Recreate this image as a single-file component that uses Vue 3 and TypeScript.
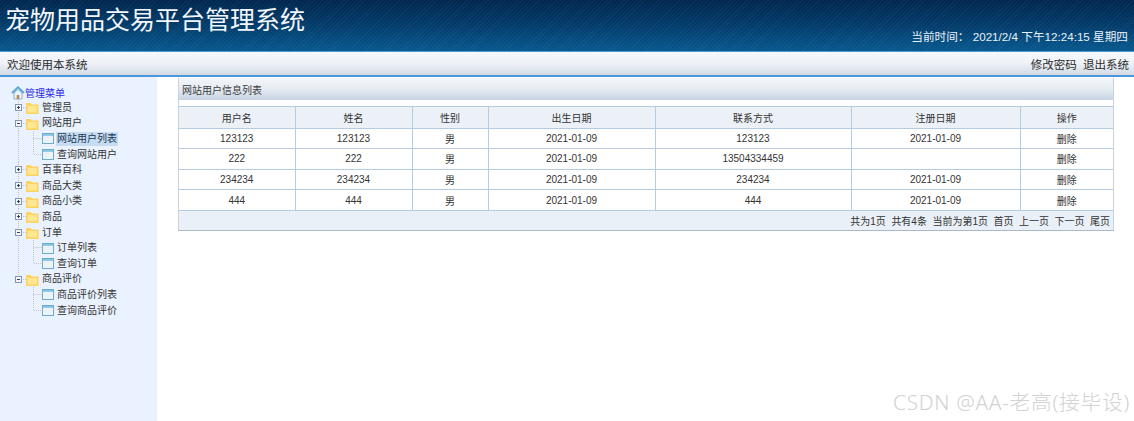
<script setup lang="ts">
interface TreeRow { label: string; kind: 'folder' | 'page'; open?: boolean; active?: boolean; last?: boolean; lastChild?: boolean }
const tree: TreeRow[] = [
  { label: '管理员', kind: 'folder' },
  { label: '网站用户', kind: 'folder', open: true },
  { label: '网站用户列表', kind: 'page', active: true },
  { label: '查询网站用户', kind: 'page', lastChild: true },
  { label: '百事百科', kind: 'folder' },
  { label: '商品大类', kind: 'folder' },
  { label: '商品小类', kind: 'folder' },
  { label: '商品', kind: 'folder' },
  { label: '订单', kind: 'folder', open: true },
  { label: '订单列表', kind: 'page' },
  { label: '查询订单', kind: 'page', lastChild: true },
  { label: '商品评价', kind: 'folder', open: true, last: true },
  { label: '商品评价列表', kind: 'page' },
  { label: '查询商品评价', kind: 'page', lastChild: true },
]
const heads = ['用户名', '姓名', '性别', '出生日期', '联系方式', '注册日期', '操作']
const rows = [
  ['123123', '123123', '男', '2021-01-09', '123123', '2021-01-09'],
  ['222', '222', '男', '2021-01-09', '13504334459', ''],
  ['234234', '234234', '男', '2021-01-09', '234234', '2021-01-09'],
  ['444', '444', '男', '2021-01-09', '444', '2021-01-09'],
]
const pager = ['共为1页', '共有4条', '当前为第1页', '首页', '上一页', '下一页', '尾页']
function trunkPath(i: number): string {
  if (i < 11) return 'M18.5 0V15.6'
  if (i === 11) return 'M18.5 0V5'
  return ''
}
</script>

<template>
  <div class="page">
    <header class="top">
      <h1 class="brand">宠物用品交易平台管理系统</h1>
      <div class="clock">当前时间： 2021/2/4 下午12:24:15 星期四</div>
    </header>
    <nav class="bar">
      <span>欢迎使用本系统</span>
      <span class="links">修改密码 退出系统</span>
    </nav>
    <div class="body">
      <aside class="side">
        <div class="root">
          <svg class="home" width="14" height="14" viewBox="0 0 14 14">
            <path d="M1 7 7 1.2 13 7" fill="none" stroke="#5aa7d6" stroke-width="1.8" />
            <path d="M3 7v6h8V7L7 3.4Z" fill="#e8f3fb" stroke="#8fb2cc" />
            <rect x="5.7" y="9" width="2.6" height="4" fill="#b5894f" />
          </svg>
          <span>管理菜单</span>
        </div>
        <div v-for="(r, i) in tree" :key="r.label" class="row">
          <svg class="guide" width="42" height="15.6" viewBox="0 0 42 15.6">
            <path v-if="trunkPath(i)" :d="trunkPath(i)" stroke="#c4c4c4" stroke-dasharray="1 1" fill="none" />
            <template v-if="r.kind === 'folder'">
              <path d="M21 7.5H26" stroke="#c4c4c4" stroke-dasharray="1 1" fill="none" />
              <rect x="15.5" y="4.5" width="6" height="6" fill="#f3f6fa" stroke="#8794ad" />
              <path d="M17 7.5H20" stroke="#28406e" />
              <path v-if="!r.open" d="M18.5 6V9" stroke="#28406e" />
              <path d="M26 3h4.5l1.5 1.5h6.5v9.5H26Z" fill="#fdd35f" />
              <rect x="27.5" y="6" width="9.5" height="6.5" fill="#ffe692" />
            </template>
            <template v-else>
              <path :d="r.lastChild ? 'M33.5 0V7.5H42' : 'M33.5 0V15.6M33.5 7.5H42'" stroke="#c4c4c4" stroke-dasharray="1 1" fill="none" />
            </template>
          </svg>
          <svg v-if="r.kind === 'page'" class="pageicon" width="13" height="13" viewBox="0 0 13 13">
            <rect x=".5" y="1.5" width="11" height="10" fill="#edf2f7" stroke="#6aaecd" />
            <rect x="1" y="2" width="10" height="1.8" fill="#86c3de" />
          </svg>
          <span class="label" :class="{ active: r.active, child: r.kind === 'page' }">{{ r.label }}</span>
        </div>
      </aside>
      <main class="main">
        <section class="panel">
          <div class="title">网站用户信息列表</div>
          <table class="grid">
            <colgroup>
              <col class="c1" /><col class="c2" /><col class="c3" />
              <col class="c4" /><col class="c5" /><col class="c6" /><col />
            </colgroup>
            <thead>
              <tr><th v-for="h in heads" :key="h">{{ h }}</th></tr>
            </thead>
            <tbody>
              <tr v-for="(r, i) in rows" :key="i">
                <td v-for="(c, j) in r" :key="j">{{ c }}</td>
                <td class="op">删除</td>
              </tr>
            </tbody>
          </table>
          <div class="pager">
            <span v-for="p in pager" :key="p">{{ p }}</span>
          </div>
        </section>
      </main>
    </div>
    <div class="mark">CSDN @AA-老高(接毕设)</div>
  </div>
</template>

<style>
html, body { margin: 0; background: #fff; }
</style>

<style scoped>
.page {
  position: relative;
  width: 1134px;
  height: 421px;
  overflow: hidden;
  display: flex;
  flex-direction: column;
  font-family: "Liberation Sans", "Noto Sans CJK SC", sans-serif;
  font-size: 10px;
  color: #333;
  background: #fff;
}
.top {
  height: 51px;
  flex: none;
  display: flex;
  justify-content: space-between;
  background:
    repeating-linear-gradient(135deg, rgba(255,255,255,.04) 0 1px, transparent 1px 3px),
    linear-gradient(#00274f 0%, #033a68 45%, #07588f 100%);
  border-bottom: 1px solid #4f9bd0;
  color: #fff;
}
.brand {
  margin: 5px 0 0 5px;
  font-size: 25px;
  line-height: 30px;
  font-weight: 400;
  color: #f2f7fb;
}
.clock {
  align-self: flex-end;
  margin: 0 6px 7px 0;
  font-size: 11.65px;
  line-height: 14px;
  color: #e8f1f8;
}
.bar {
  height: 23px;
  flex: none;
  display: flex;
  align-items: center;
  justify-content: space-between;
  padding: 0 5px 0 7px;
  background: linear-gradient(#f6f8fb 0%, #eef2f7 50%, #d3dae3 100%);
  border-bottom: 2px solid #4a97dd;
  font-size: 11.5px;
  color: #2b2b2b;
}
.links { word-spacing: 3px; }
.body {
  flex: 1;
  display: flex;
  min-height: 0;
}
.side {
  width: 157px;
  flex: none;
  background: #e9f2fe;
  padding-top: 8px;
  box-sizing: border-box;
}
.root {
  height: 15px;
  display: flex;
  align-items: center;
  padding-left: 11px;
  color: #2a2ae8;
  font-size: 10px;
}
.home { flex: none; }
.row {
  height: 15.6px;
  display: flex;
  align-items: center;
  white-space: nowrap;
  font-size: 10px;
  color: #333;
}
.guide { flex: none; }
.pageicon { flex: none; }
.label { line-height: 14px; padding: 0 1px 0 0; }
.label.child { margin-left: 1px; padding-left: 1px; }
.label.active { background: #c5dcf3; color: #23364f; }
.main {
  flex: 1;
  padding: 1px 0 0 21px;
  min-width: 0;
}
.panel {
  width: 936px;
  box-sizing: border-box;
  border-left: 1px solid #c9d2dd;
  border-right: 1px solid #c9d2dd;
  border-bottom: 1px solid #aab8c8;
  background: #fff;
}
.title {
  height: 22px;
  line-height: 26px;
  padding-left: 3px;
  margin-bottom: 6px;
  background: linear-gradient(#f3f6fa 0%, #e6ecf3 50%, #c6d3e2 100%);
  font-size: 10px;
  color: #3b3b3b;
}
.grid {
  width: 100%;
  table-layout: fixed;
  border-collapse: collapse;
  font-size: 10px;
  text-align: center;
}
.c1 { width: 116px; }
.c2 { width: 117px; }
.c3 { width: 76px; }
.c4 { width: 167px; }
.c5 { width: 196px; }
.c6 { width: 169px; }
.grid th, .grid td {
  border: 1px solid #b4cbe3;
  padding: 0;
  height: 19.6px;
  font-weight: 400;
  color: #333;
}
.grid th { height: 20.6px; background: #ebf1f7; }
.grid tr > :first-child { border-left: 0; }
.grid tr > :last-child { border-right: 0; }
.pager {
  height: 19px;
  display: flex;
  justify-content: flex-end;
  align-items: center;
  gap: 5.5px;
  padding-right: 3px;
  background: #eaf0f7;
  font-size: 10px;
  color: #333;
}
.mark {
  position: absolute;
  right: 4px;
  bottom: 7px;
  font-size: 20.8px;
  line-height: 24px;
  color: #d2d2d2;
  letter-spacing: .7px;
  font-family: "Noto Sans", "Noto Sans CJK SC", sans-serif;
  font-weight: 300;
}
</style>
